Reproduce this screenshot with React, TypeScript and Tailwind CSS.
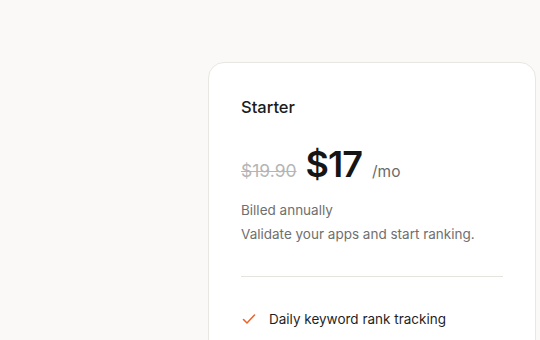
const features = ['Daily keyword rank tracking'];

const CheckIcon = () => (
	<svg width="16" height="16" viewBox="0 0 16 16" fill="none" className="shrink-0">
		<path d="M2.5 8.5l3.5 3.5 7.5-8" stroke="#e8672c" strokeWidth="1.6" strokeLinecap="round" strokeLinejoin="round" />
	</svg>
);

const PricingCard = () => (
	<div className="w-[328px] shrink-0 rounded-[16px] border border-[#e9e7e2] bg-white px-[32px] pt-[32px] pb-[32px]">
		<p className="text-[16.5px] font-medium leading-[24px] text-[#1c1c1c]">Starter</p>

		<div className="mt-[21px] flex items-baseline">
			<span className="text-[17.5px] text-[#b5b5b5] line-through decoration-[1px]">$19.90</span>
			<span className="ml-[9px] text-[36px] font-semibold leading-[48px] tracking-[-1px] text-[#151515]">$17</span>
			<span className="ml-[10px] text-[15.5px] text-[#6b6b6b]">/mo</span>
		</div>

		<div className="mt-[10px] text-[13.5px] leading-[24px] text-[#6f6f6f]">
			<p>Billed annually</p>
			<p>Validate your apps and start ranking.</p>
		</div>

		<div className="mt-[30px] h-px w-full bg-[#e5e3de]" />

		<ul className="mt-[30px] flex flex-col gap-3">
			{features.map((item) => (
				<li key={item} className="flex items-center gap-[12px] text-[13.5px] leading-[24px] text-[#1f1f1f]">
					<CheckIcon />
					{item}
				</li>
			))}
		</ul>
	</div>
);

export default function App() {
	return (
		<div
			className="h-[340px] w-[540px] overflow-hidden bg-[#faf9f7] pl-[208px] pt-[62px]"
			style={{ fontFamily: 'Inter, "Noto Sans", sans-serif' }}
		>
			<PricingCard />
		</div>
	);
}
